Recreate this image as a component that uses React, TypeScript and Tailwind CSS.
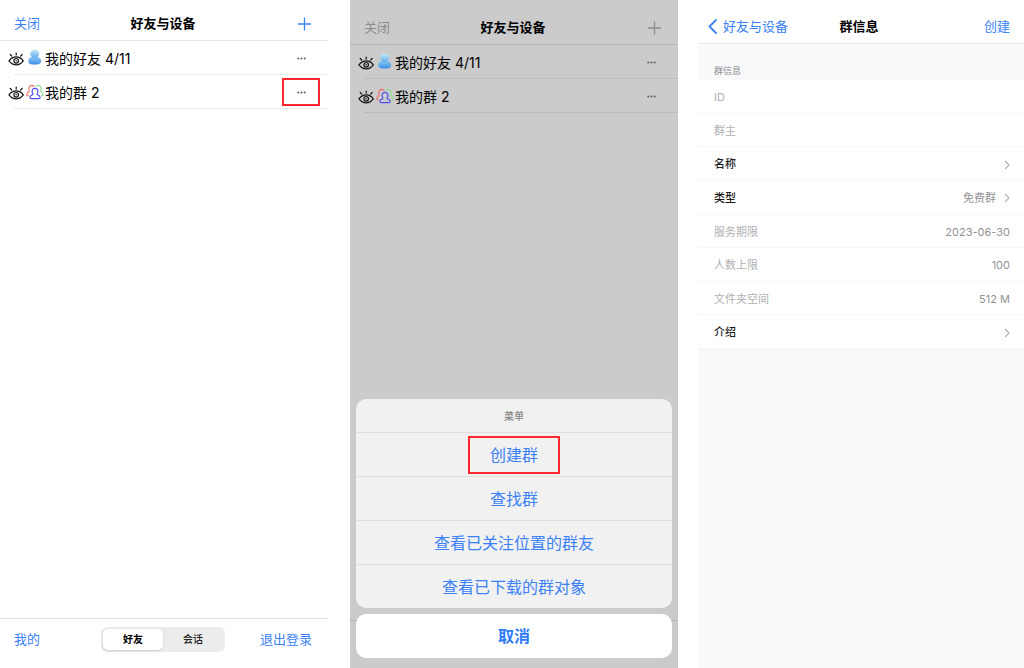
import type { ReactNode } from 'react';

const menuItems = ['创建群', '查找群', '查看已关注位置的群友', '查看已下载的群对象'];

type InfoRow = { label: string; value?: string; editable?: boolean };

const infoRows: InfoRow[] = [
    { label: 'ID' },
    { label: '群主' },
    { label: '名称', editable: true },
    { label: '类型', value: '免费群', editable: true },
    { label: '服务期限', value: '2023-06-30' },
    { label: '人数上限', value: '100' },
    { label: '文件夹空间', value: '512 M' },
    { label: '介绍', editable: true },
];

function EyeIcon() {
    return (
        <svg className="w-4 h-4 shrink-0" viewBox="0 0 16 16" fill="none" stroke="#111" strokeLinecap="round">
            <path d="M1 10.8C3 8.200 5.300 6.900 8.200 6.900s5.200 1.300 7.100 3.900c-2 2.700-4.200 4-7.100 4S3 13.500 1 10.800Z" strokeWidth="1.200" />
            <circle cx="8.200" cy="10.800" r="2.300" strokeWidth="1.200" />
            <circle cx="8.200" cy="10.800" r="0.700" fill="#111" stroke="none" />
            <path d="M8.200 3.200v1.800M2.200 4.400l1.500 1.600M14.200 4.400l-1.500 1.600" strokeWidth="1.200" />
        </svg>
    );
}

function FriendIcon() {
    return (
        <svg className="w-[18px] h-[18px] shrink-0" viewBox="0 0 18 18">
            <defs>
                <linearGradient id="friendBody" x1="0" y1="0" x2="0" y2="1">
                    <stop offset="0" stopColor="#8cc8f5" />
                    <stop offset="0.45" stopColor="#68b0ee" />
                    <stop offset="1" stopColor="#3a8ae4" />
                </linearGradient>
                <linearGradient id="friendHead" x1="0" y1="0" x2="0" y2="1">
                    <stop offset="0" stopColor="#c9ecfb" />
                    <stop offset="1" stopColor="#62acec" />
                </linearGradient>
            </defs>
            <path d="M4.200 8.600C6 7.600 11.500 7.600 13.300 8.600c1.500.9 1.800 2.300 1.700 4.200-.1 2-2.600 2.800-6.300 2.800s-6.200-.8-6.300-2.800c-.1-1.900.3-3.300 1.800-4.200Z" fill="url(#friendBody)" />
            <ellipse cx="8.700" cy="4.700" rx="4.500" ry="4.200" fill="url(#friendHead)" />
        </svg>
    );
}

function GroupIcon() {
    return (
        <svg className="w-[18px] h-[18px] shrink-0" viewBox="0 0 18 18" fill="none" strokeWidth="1.1" strokeLinecap="round" strokeLinejoin="round">
            <path d="M2.500 12.800H1c-.7-2.200.5-3.400 2-4.300.5-.4.400-.8.100-1.300C2.200 4.500 3.500 2.400 5.700 2.400c1 0 1.800.4 2.300 1.100" stroke="#f46a6a" />
            <path d="M10.200 3.300c.5-.6 1.200-.9 2-.9 2.200 0 3.500 2.100 2.600 4.800-.3.500-.4.900.1 1.300 1.500.9 2.700 2.100 2 4.300h-1.500" stroke="#8ae08a" />
            <path d="M9 5.400c2 0 3.100 1.500 2.900 3.300-.1 1-.5 1.500-.8 2.100-.2.500 0 .8.500 1 1.400.5 2.500 1.100 2.500 2.700 0 .8-.4 1.200-1.200 1.200H5.100c-.8 0-1.200-.4-1.200-1.200 0-1.600 1.100-2.200 2.500-2.700.5-.2.700-.5.5-1-.3-.6-.7-1.100-.8-2.100C5.900 6.900 7 5.400 9 5.400Z" stroke="#4d4df0" strokeWidth="1.2" />
        </svg>
    );
}

function PlusIcon() {
    return (
        <svg className="w-4 h-4" viewBox="0 0 16 16" stroke="currentColor" strokeWidth="1.3">
            <path d="M8.500 1.500v13M2 8h13" />
        </svg>
    );
}

function ChevronRight() {
    return (
        <svg className="w-1.5 h-2.5" viewBox="0 0 6 10" fill="none" stroke="#b4b4b8" strokeWidth="1.2">
            <path d="M1 1l4 4-4 4" />
        </svg>
    );
}

function ListRow({ icon, title, marked }: { icon: ReactNode; title: string; marked?: boolean }) {
    return (
        <li className="relative flex items-center h-[34px] pl-2">
            <EyeIcon />
            <span className="ml-0.5 shrink-0">{icon}</span>
            <span className="flex-1 ml-px text-[14px]">{title}</span>
            <button
                aria-label="更多"
                className={`w-[38px] h-7 mr-2 flex items-center justify-center border-2 ${marked ? 'border-[#f8282c]' : 'border-transparent'}`}
            >
                <svg className="w-[9px] h-[3px]" viewBox="0 0 9 3" fill="#666">
                    <circle cx="1.3" cy="1.5" r="1.1" />
                    <circle cx="4.5" cy="1.5" r="1.1" />
                    <circle cx="7.7" cy="1.5" r="1.1" />
                </svg>
            </button>
            <span className="absolute left-3.5 right-0 bottom-0 h-px bg-black/8" />
        </li>
    );
}

function FriendList({ marked }: { marked?: boolean }) {
    return (
        <ul>
            <ListRow icon={<FriendIcon />} title="我的好友 4/11" />
            <ListRow icon={<GroupIcon />} title="我的群 2" marked={marked} />
        </ul>
    );
}

function FriendsPanel() {
    return (
        <section className="flex-[328] min-w-0 flex flex-col">
            <header className="grid grid-cols-3 items-center h-[41px] pt-2 pl-3.5 pr-4 border-b border-[#e4e4e4] text-[13px] text-[#3b82f6]">
                <button className="justify-self-start">关闭</button>
                <h1 className="justify-self-center font-bold text-black whitespace-nowrap">好友与设备</h1>
                <button className="justify-self-end" aria-label="添加"><PlusIcon /></button>
            </header>
            <FriendList marked />
            <footer className="mt-auto grid grid-cols-3 items-center h-[50px] pb-2 pl-3.5 pr-4 border-t border-[#e0e0e0] text-[13px] text-[#3b82f6]">
                <button className="justify-self-start">我的</button>
                <div className="justify-self-center flex w-[124px] h-[25px] p-0.5 rounded-md bg-[#ececed] text-[10px] font-medium text-[#222]">
                    <button className="flex-1 rounded-[5px] bg-white shadow font-bold text-black">好友</button>
                    <button className="flex-1">会话</button>
                </div>
                <button className="justify-self-end">退出登录</button>
            </footer>
        </section>
    );
}

function MenuPanel() {
    return (
        <section className="relative flex-[328] min-w-0 ml-[22px] flex flex-col bg-[#cbcbcb]">
            <header className="grid grid-cols-3 items-center h-[45px] pt-3 pl-3.5 pr-4 border-b border-[#b8b8b8] text-[13px] text-[#8c8c8c]">
                <button className="justify-self-start">关闭</button>
                <h2 className="justify-self-center font-bold text-black whitespace-nowrap">好友与设备</h2>
                <button className="justify-self-end" aria-label="添加"><PlusIcon /></button>
            </header>
            <FriendList />
            <div className="mt-auto h-12 border-t border-[#b4b4b4]" />

            {/* Action sheet */}
            <div className="absolute inset-x-1.5 bottom-2.5 flex flex-col gap-1.5 text-center text-base text-[#3b82f6]">
                <div className="rounded-[10px] bg-[#f1f1f1]">
                    <p className="h-[33px] leading-[34px] text-[10px] font-medium text-[#858585]">菜单</p>
                    {menuItems.map((item, i) => (
                        <div key={item} className="h-11 flex items-center justify-center border-t border-[#dedede]">
                            <button className={i === 0 ? 'h-[38px] px-5 border-2 border-[#f8282c]' : 'h-[38px] px-5'}>{item}</button>
                        </div>
                    ))}
                </div>
                <button className="h-11 rounded-[10px] bg-white font-bold text-[#2f7bf6]">取消</button>
            </div>
        </section>
    );
}

function GroupInfoPanel() {
    return (
        <section className="flex-[326] min-w-0 ml-5 bg-[#f9f9fb]">
            <header className="grid grid-cols-3 items-center h-11 pt-2.5 pl-2.5 pr-3.5 bg-white border-b border-[#e8e8e8] text-[13px] text-[#3b82f6]">
                <button className="justify-self-start flex items-center gap-1.5 whitespace-nowrap">
                    <svg className="w-[9px] h-[15px]" viewBox="0 0 9 15" fill="none" stroke="currentColor" strokeWidth="1.8" strokeLinecap="round" strokeLinejoin="round">
                        <path d="M8 1L1.500 7.500 8 14" />
                    </svg>
                    好友与设备
                </button>
                <h2 className="justify-self-center font-bold text-black">群信息</h2>
                <button className="justify-self-end">创建</button>
            </header>
            <h3 className="h-9 pt-5 px-4 text-[9px] leading-[14px] text-[#8a8a8e]">群信息</h3>
            <dl className="grid auto-rows-fr h-[269px] bg-white text-[11px] text-[#b0b0b2]">
                {infoRows.map((row) => (
                    <div key={row.label} className="flex items-center gap-2 pt-0.5 pl-4 pr-3.5 border-b border-[#f6f6f7]">
                        <dt className={row.editable ? 'flex-1 font-medium text-[#1c1c1e]' : 'flex-1'}>{row.label}</dt>
                        <dd className="flex items-center gap-2 text-[#929296]">
                            {row.value}
                            {row.editable && <ChevronRight />}
                        </dd>
                    </div>
                ))}
            </dl>
        </section>
    );
}

export default function App() {
    return (
        <main className="flex min-h-screen bg-white font-['Inter','Noto_Sans_CJK_SC',sans-serif] text-black">
            <FriendsPanel />
            <MenuPanel />
            <GroupInfoPanel />
        </main>
    );
}
